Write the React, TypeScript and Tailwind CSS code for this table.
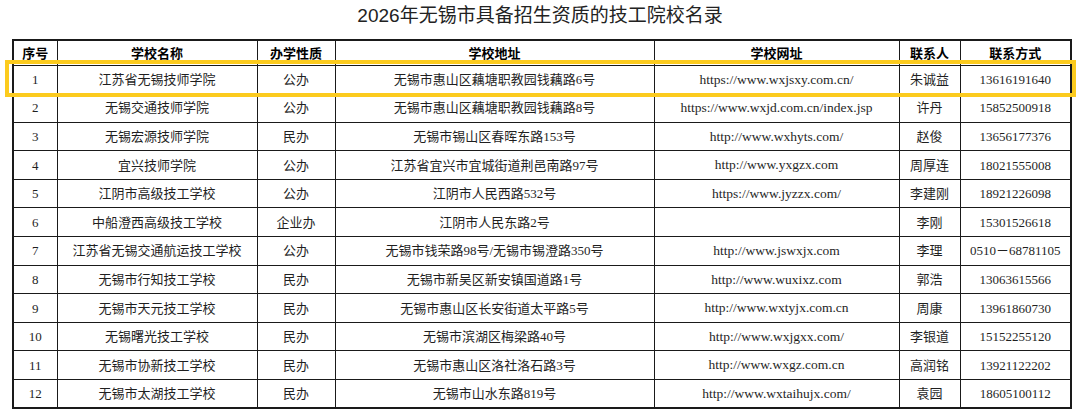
import React from "react";

const rows: string[][] = [
  ["1", "江苏省无锡技师学院", "公办", "无锡市惠山区藕塘职教园钱藕路6号", "https://www.wxjsxy.com.cn/", "朱诚益", "13616191640"],
  ["2", "无锡交通技师学院", "公办", "无锡市惠山区藕塘职教园钱藕路8号", "https://www.wxjd.com.cn/index.jsp", "许丹", "15852500918"],
  ["3", "无锡宏源技师学院", "民办", "无锡市锡山区春晖东路153号", "http://www.wxhyts.com/", "赵俊", "13656177376"],
  ["4", "宜兴技师学院", "公办", "江苏省宜兴市宜城街道荆邑南路97号", "http://www.yxgzx.com", "周厚连", "18021555008"],
  ["5", "江阴市高级技工学校", "公办", "江阴市人民西路532号", "https://www.jyzzx.com/", "李建刚", "18921226098"],
  ["6", "中船澄西高级技工学校", "企业办", "江阴市人民东路2号", "", "李刚", "15301526618"],
  ["7", "江苏省无锡交通航运技工学校", "公办", "无锡市钱荣路98号/无锡市锡澄路350号", "http://www.jswxjx.com", "李理", "0510－68781105"],
  ["8", "无锡市行知技工学校", "民办", "无锡市新吴区新安镇国道路1号", "http://www.wuxixz.com", "郭浩", "13063615566"],
  ["9", "无锡市天元技工学校", "民办", "无锡市惠山区长安街道太平路5号", "http://www.wxtyjx.com.cn", "周康", "13961860730"],
  ["10", "无锡曙光技工学校", "民办", "无锡市滨湖区梅梁路40号", "http://www.wxjgxx.com/", "李银道", "15152255120"],
  ["11", "无锡市协新技工学校", "民办", "无锡市惠山区洛社洛石路3号", "http://www.wxgz.com.cn", "高润铭", "13921122202"],
  ["12", "无锡市太湖技工学校", "民办", "无锡市山水东路819号", "http://www.wxtaihujx.com/", "袁园", "18605100112"],
];

const headers = ["序号", "学校名称", "办学性质", "学校地址", "学校网址", "联系人", "联系方式"];

export default function App() {
  return (
    <div
      className="relative w-[1080px] h-[411px] bg-white overflow-hidden text-[#222]"
      style={{ fontFamily: '"Liberation Serif", "Noto Sans CJK SC", serif' }}
    >
      <div
        className="h-[39px] flex items-center justify-center pb-[6px] text-[19px] text-[#222]"
        style={{ fontFamily: '"Liberation Sans", "Noto Sans CJK SC", sans-serif' }}
      >
        2026年无锡市具备招生资质的技工院校名录
      </div>
      <table className="ml-[12px] w-[1058px] table-fixed border-collapse border-[2px] border-[#1a1a1a]">
        <colgroup>
          <col className="w-[44px]" />
          <col className="w-[200px]" />
          <col className="w-[78px]" />
          <col className="w-[319px]" />
          <col className="w-[245px]" />
          <col className="w-[61px]" />
          <col className="w-[111px]" />
        </colgroup>
        <thead>
          <tr className="h-[25px]">
            {headers.map((h) => (
              <th
                key={h}
                className="border-[1.5px] border-[#1a1a1a] text-[13px] font-bold text-black text-center p-0 leading-none"
                style={{ fontFamily: '"Noto Sans CJK SC", sans-serif' }}
              >
                {h}
              </th>
            ))}
          </tr>
        </thead>
        <tbody>
          {rows.map((r) => (
            <tr key={r[0]} className="h-[28.6px]">
              {r.map((c, i) => (
                <td
                  key={i}
                  className={
                    i === 4
                      ? "border-[1.5px] border-[#1a1a1a] text-[13.5px] text-center p-0 leading-none whitespace-nowrap text-[#1f1f1f]"
                      : "border-[1.5px] border-[#1a1a1a] text-[13px] text-center p-0 leading-none whitespace-nowrap text-[#1f1f1f]"
                  }
                >
                  {c}
                </td>
              ))}
            </tr>
          ))}
        </tbody>
      </table>
      <div className="absolute left-[5px] top-[60px] w-[1071px] h-[37px] border-[4px] border-[#FCCB1E] pointer-events-none" />
    </div>
  );
}
